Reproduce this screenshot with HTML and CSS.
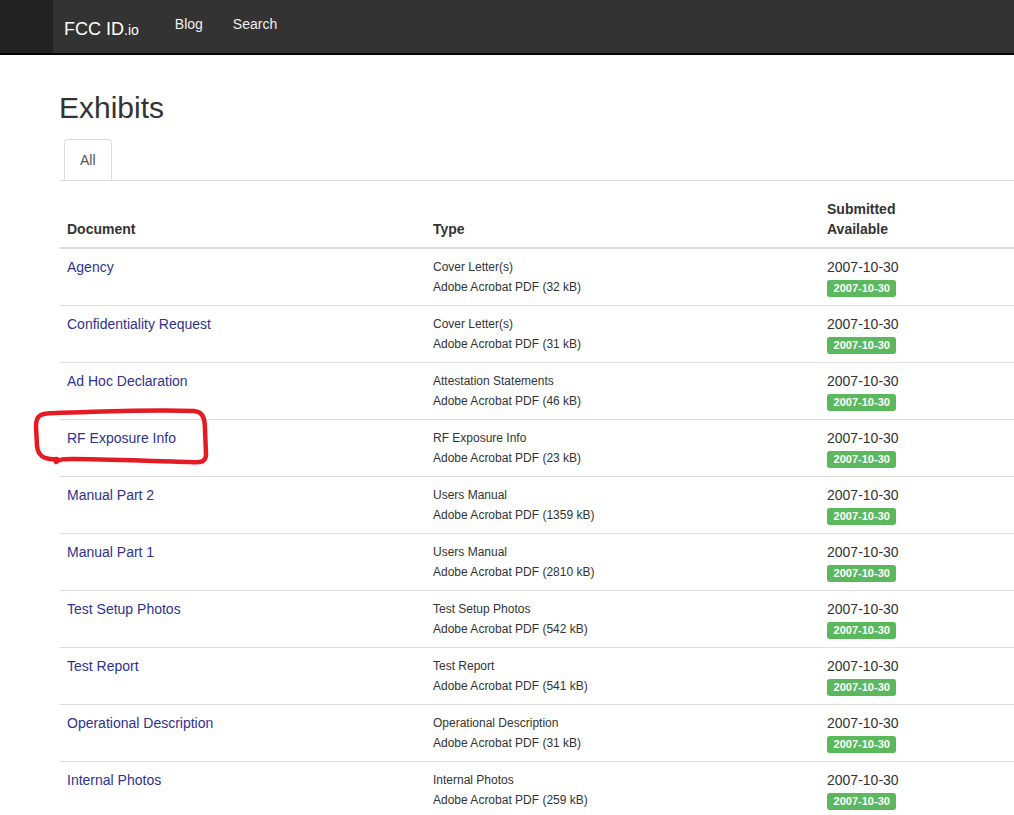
FILE: index.html
```html
<!DOCTYPE html>
<html lang="en">
<head>
<meta charset="utf-8">
<title>Exhibits - FCC ID.io</title>
<link rel="stylesheet" href="styles.css">
</head>
<body>
<header class="navbar">
  <div class="navbar-side"></div>
  <a class="brand" href="#">FCC ID<span class="brand-tld">.io</span></a>
  <nav class="nav">
    <a href="#">Blog</a>
    <a href="#">Search</a>
  </nav>
</header>
<main class="container">
  <h1 class="title">Exhibits</h1>
  <ul class="tabs">
    <li class="tab">All</li>
  </ul>
  <table class="exhibits">
    <colgroup>
      <col class="col-doc">
      <col class="col-type">
      <col class="col-date">
    </colgroup>
    <thead>
      <tr>
        <th>Document</th>
        <th>Type</th>
        <th>Submitted<br>Available</th>
      </tr>
    </thead>
    <tbody>
      <tr><td><a href="#">Agency</a></td><td class="type">Cover Letter(s)<br>Adobe Acrobat PDF (32 kB)</td><td>2007-10-30<br><span class="badge">2007-10-30</span></td></tr>
      <tr><td><a href="#">Confidentiality Request</a></td><td class="type">Cover Letter(s)<br>Adobe Acrobat PDF (31 kB)</td><td>2007-10-30<br><span class="badge">2007-10-30</span></td></tr>
      <tr><td><a href="#">Ad Hoc Declaration</a></td><td class="type">Attestation Statements<br>Adobe Acrobat PDF (46 kB)</td><td>2007-10-30<br><span class="badge">2007-10-30</span></td></tr>
      <tr><td><a href="#">RF Exposure Info</a></td><td class="type">RF Exposure Info<br>Adobe Acrobat PDF (23 kB)</td><td>2007-10-30<br><span class="badge">2007-10-30</span></td></tr>
      <tr><td><a href="#">Manual Part 2</a></td><td class="type">Users Manual<br>Adobe Acrobat PDF (1359 kB)</td><td>2007-10-30<br><span class="badge">2007-10-30</span></td></tr>
      <tr><td><a href="#">Manual Part 1</a></td><td class="type">Users Manual<br>Adobe Acrobat PDF (2810 kB)</td><td>2007-10-30<br><span class="badge">2007-10-30</span></td></tr>
      <tr><td><a href="#">Test Setup Photos</a></td><td class="type">Test Setup Photos<br>Adobe Acrobat PDF (542 kB)</td><td>2007-10-30<br><span class="badge">2007-10-30</span></td></tr>
      <tr><td><a href="#">Test Report</a></td><td class="type">Test Report<br>Adobe Acrobat PDF (541 kB)</td><td>2007-10-30<br><span class="badge">2007-10-30</span></td></tr>
      <tr><td><a href="#">Operational Description</a></td><td class="type">Operational Description<br>Adobe Acrobat PDF (31 kB)</td><td>2007-10-30<br><span class="badge">2007-10-30</span></td></tr>
      <tr><td><a href="#">Internal Photos</a></td><td class="type">Internal Photos<br>Adobe Acrobat PDF (259 kB)</td><td>2007-10-30<br><span class="badge">2007-10-30</span></td></tr>
    </tbody>
  </table>
</main>
<svg class="annotation" width="1014" height="815" viewBox="0 0 1014 815" aria-hidden="true">
  <path d="M 57 459 C 44 460 38 456 37 446 L 36 426 C 36 415 41 413 55 413 C 100 412 150 409 194 411 C 203 412 205 418 205 430 L 206 454 C 206 462 201 463 190 462 C 150 461 100 459 72 459 C 64 459 60 459 56 462" fill="none" stroke="#e31b23" stroke-width="4.5" stroke-linecap="round" stroke-linejoin="round"/>
</svg>
</body>
</html>
```
FILE: styles.css
```css
html {
  overflow: hidden;
}

body {
  margin: 0;
  font-family: "Liberation Sans", Arial, sans-serif;
  font-size: 14px;
  line-height: 20px;
  color: #333;
  background: #fff;
  position: relative;
}

a {
  text-decoration: none;
}

.navbar {
  display: flex;
  align-items: flex-start;
  height: 53px;
  background: #333;
  border-bottom: 2px solid #050505;
}

.navbar-side {
  width: 53px;
  height: 53px;
  background: #222;
}

.brand {
  margin-left: 11px;
  padding-top: 19px;
  font-size: 18px;
  line-height: 20px;
  color: #fff;
}

.brand-tld {
  font-size: 14px;
}

.nav {
  display: flex;
  margin-left: 21px;
}

.nav a {
  padding: 14px 15px 0;
  color: #eee;
  font-size: 14px;
  line-height: 20px;
}

.container {
  padding-left: 59px;
}

.title {
  margin: 36px 0 15px;
  font-size: 30px;
  line-height: 33px;
  font-weight: 400;
  color: #333;
}

.tabs {
  display: flex;
  margin: 0;
  padding: 0 0 0 5px;
  list-style: none;
  border-bottom: 1px solid #ddd;
}

.tab {
  padding: 10px 15px;
  border: 1px solid #ddd;
  border-bottom: none;
  border-radius: 4px 4px 0 0;
  color: #555;
  line-height: 20px;
}

.exhibits {
  margin-top: 10px;
  border-collapse: collapse;
  table-layout: fixed;
  width: 955px;
}

.col-doc { width: 366px; }
.col-type { width: 394px; }
.col-date { width: 195px; }

.exhibits th {
  padding: 8px;
  text-align: left;
  vertical-align: bottom;
  font-weight: 700;
  border-bottom: 2px solid #ddd;
}

.exhibits td {
  padding: 8px;
  vertical-align: top;
  border-top: 1px solid #ddd;
}

.exhibits td a {
  color: #2f3290;
}

.exhibits td.type {
  font-size: 12px;
}

.badge {
  display: inline;
  padding: 0.2em 0.6em 0.3em;
  font-size: 11px;
  font-weight: 700;
  line-height: 1;
  color: #fff;
  background: #5cb85c;
  border-radius: 0.25em;
}

.annotation {
  position: absolute;
  top: 0;
  left: 0;
  pointer-events: none;
}
```
